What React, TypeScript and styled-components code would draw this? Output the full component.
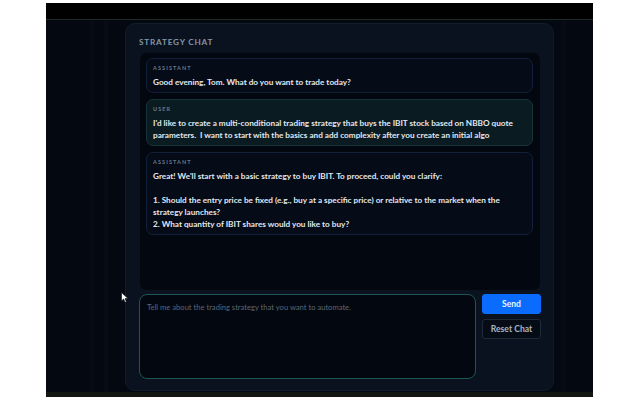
import React from "react";
import styled, { createGlobalStyle } from "styled-components";

const Global = createGlobalStyle`
  html, body { margin: 0; padding: 0; background: #ffffff; }
  body { font-family: Lato, "Noto Sans", sans-serif; }
  * { box-sizing: border-box; }
`;

const Frame = styled.div`
  position: relative;
  margin: 3px 0 0 46px;
  width: 547px;
  height: 394px;
  display: flex;
  flex-direction: column;
  background: #040810;
`;

const TopBar = styled.div`
  height: 17px;
  flex: none;
  background: #000000;
  border-bottom: 1px solid #1f2a24;
`;

const Main = styled.div`
  flex: 1;
  display: flex;
  padding: 3px 0 0 79px;
  background:
    linear-gradient(90deg,
      transparent 44px, rgba(255,255,255,0.012) 44px, rgba(255,255,255,0.012) 48px,
      transparent 48px, transparent 58px, rgba(255,255,255,0.01) 58px, rgba(255,255,255,0.01) 62px,
      transparent 62px, transparent 515px, rgba(255,255,255,0.01) 515px, rgba(255,255,255,0.01) 520px,
      transparent 520px),
    #040810;
`;

const BottomStrip = styled.div`
  height: 5px;
  flex: none;
  background: #11160e;
`;

const Panel = styled.section`
  width: 429px;
  height: 368px;
  display: flex;
  flex-direction: column;
  padding: 12px 13px 12px 14px;
  background: #09121e;
  border: 1px solid #111c2a;
  border-radius: 10px;
`;

const Title = styled.h2`
  margin: 0 0 0 -1px;
  height: 12px;
  line-height: 12px;
  font-size: 8.2px;
  font-weight: 700;
  letter-spacing: 0.8px;
  color: #8795a6;
`;

const Messages = styled.div`
  margin-top: 5px;
  height: 237px;
  flex: none;
  display: flex;
  flex-direction: column;
  gap: 6px;
  padding: 5px 7px 0 6px;
  background: #03070f;
  border-radius: 7px;
`;

const Bubble = styled.div<{ $user?: boolean }>`
  padding: 5px 8px 4px 6px;
  border-radius: 7px;
  background: ${(p) => (p.$user ? "#0a1b22" : "#050b17")};
  border: 1px solid ${(p) => (p.$user ? "#173539" : "#13203a")};
`;

const Role = styled.div`
  height: 8px;
  line-height: 8px;
  font-size: 5.5px;
  font-weight: 700;
  letter-spacing: 1.1px;
  color: #6c7787;
`;

const Body = styled.div`
  margin-top: 4px;
  font-size: 8.2px;
  line-height: 12px;
  font-weight: 700;
  color: #e3e8ee;
  white-space: pre-wrap;
`;

const Composer = styled.div`
  margin: 4px -1px 0 -1px;
  display: flex;
  gap: 6px;
`;

const Input = styled.textarea`
  width: 337px;
  height: 85px;
  resize: none;
  padding: 7px 7px;
  background: #03070f;
  border: 1px solid #1d5653;
  border-radius: 8px;
  color: #e3e8ee;
  font-family: Lato, sans-serif;
  font-size: 7.6px;
  line-height: 10px;
  outline: none;
  caret-color: #c0c8d0;
  &::placeholder { color: #5b6676; }
`;

const Actions = styled.div`
  width: 59px;
  display: flex;
  flex-direction: column;
  gap: 5px;
`;

const Button = styled.button<{ $primary?: boolean }>`
  height: 20px;
  padding: 0;
  border-radius: 3px;
  font-family: Lato, sans-serif;
  font-size: 8.6px;
  font-weight: 700;
  cursor: pointer;
  color: ${(p) => (p.$primary ? "#eaf2ff" : "#aab4c0")};
  background: ${(p) => (p.$primary ? "#0a6cff" : "#060c16")};
  border: 1px solid ${(p) => (p.$primary ? "#0a6cff" : "#1e2a38")};
`;

const Pointer = styled.svg`
  position: absolute;
  left: 75px;
  top: 289px;
`;

export default function App() {
  return (
    <>
      <Global />
      <Frame>
        <TopBar />
        <Main>
          <Panel>
            <Title>STRATEGY CHAT</Title>
            <Messages>
              <Bubble>
                <Role>ASSISTANT</Role>
                <Body>Good evening, Tom. What do you want to trade today?</Body>
              </Bubble>
              <Bubble $user>
                <Role>USER</Role>
                <Body>
                  I'd like to create a multi-conditional trading strategy that buys the IBIT stock based on NBBO quote
                  parameters.  I want to start with the basics and add complexity after you create an initial algo
                </Body>
              </Bubble>
              <Bubble>
                <Role>ASSISTANT</Role>
                <Body>{`Great! We'll start with a basic strategy to buy IBIT. To proceed, could you clarify:

1. Should the entry price be fixed (e.g., buy at a specific price) or relative to the market when the
strategy launches?
2. What quantity of IBIT shares would you like to buy?`}</Body>
              </Bubble>
            </Messages>
            <Composer>
              <Input placeholder="Tell me about the trading strategy that you want to automate." />
              <Actions>
                <Button $primary>Send</Button>
                <Button>Reset Chat</Button>
              </Actions>
            </Composer>
          </Panel>
        </Main>
        <BottomStrip />
        <Pointer width="8" height="11" viewBox="0 0 8 11">
          <path d="M0.5 0.5 L0.5 9 L2.6 7 L4 10.3 L5.4 9.7 L4.1 6.6 L7 6.6 Z" fill="#ffffff" stroke="#1a1a1a" strokeWidth="0.7" />
        </Pointer>
      </Frame>
    </>
  );
}
